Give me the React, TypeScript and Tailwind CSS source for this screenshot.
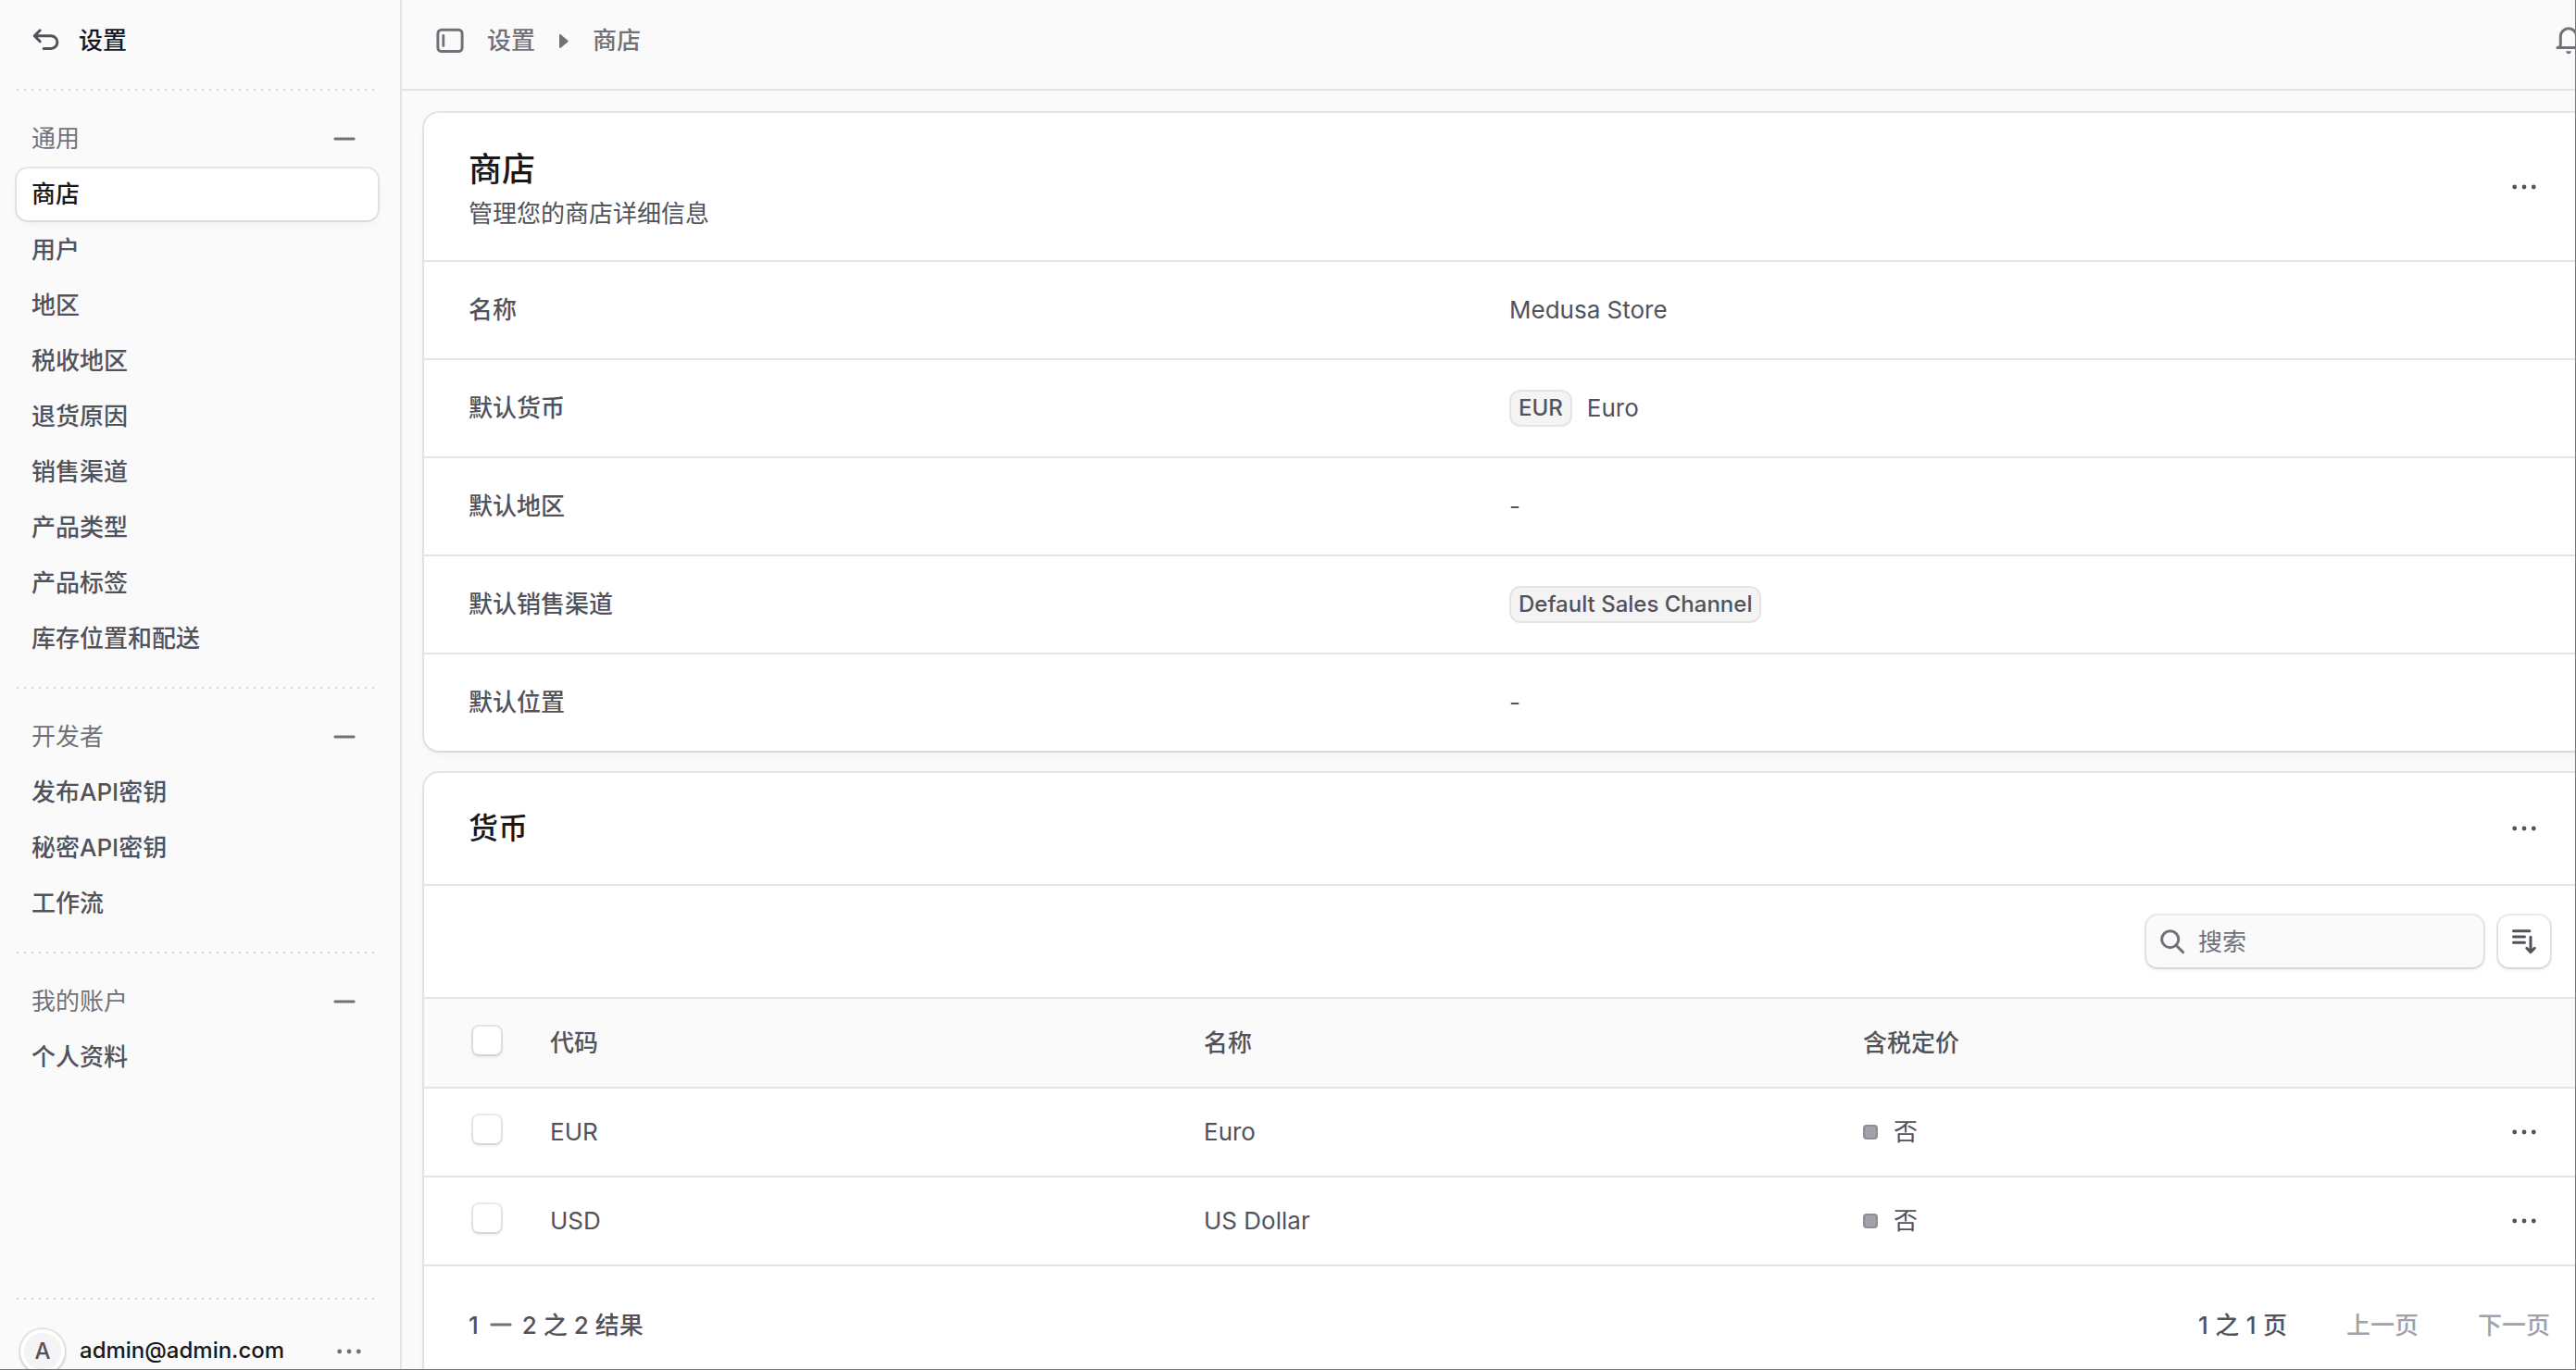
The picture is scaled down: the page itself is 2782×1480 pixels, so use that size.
import type { ReactNode } from "react";

type IconProps = { className?: string; children: ReactNode };

const Icon = ({ className = "", children }: IconProps) => (
  <svg
    viewBox="0 0 15 15"
    fill="none"
    stroke="currentColor"
    strokeWidth={1.5}
    strokeLinecap="round"
    strokeLinejoin="round"
    className={`size-[30px] shrink-0 ${className}`}
  >
    {children}
  </svg>
);

const BackIcon = () => (
  <Icon className="text-[#52525b]">
    <path d="M4.6 1.9 1.6 4.9l3 3M1.6 4.9h8.95a3.4 3.4 0 0 1 0 6.8H6.6" />
  </Icon>
);

const PanelIcon = () => (
  <Icon className="text-[#71717a]">
    <rect x="0.95" y="1.6" width="13.1" height="11.7" rx="2" />
    <path d="M3.9 4.7v5.6" strokeWidth={1.4} />
  </Icon>
);

const BellIcon = () => (
  <Icon className="text-[#71717a]">
    <path d="M1.45 11.3c.9 0 1.7-.6 1.7-1.6V5.25a4.35 4.35 0 0 1 8.7 0V9.7c0 1 .8 1.6 1.7 1.6z" />
    <path d="M6 13.1h3c-.2.9-.8 1.5-1.5 1.5S6.2 14 6 13.1z" fill="currentColor" stroke="none" />
  </Icon>
);

const MinusIcon = () => (
  <Icon className="text-[#71717a]">
    <path d="M2.45 7.5h10.1" />
  </Icon>
);

const DotsIcon = ({ className = "text-[#52525b]" }: { className?: string }) => (
  <Icon className={className}>
    <g fill="currentColor" stroke="none">
      <circle cx="2.35" cy="7.5" r="1.2" />
      <circle cx="7.5" cy="7.5" r="1.2" />
      <circle cx="12.65" cy="7.5" r="1.2" />
    </g>
  </Icon>
);

const SearchIcon = () => (
  <Icon className="text-[#71717a]">
    <circle cx="6.35" cy="6.35" r="4.5" />
    <path d="m9.6 9.6 3.7 3.7" />
  </Icon>
);

const SortIcon = () => (
  <Icon className="text-[#52525b]">
    <path d="M1.75 1.9h8.7M1.75 5h6M1.75 8.15h6M11 5.1v8.2M8.9 11.15l2.1 2.15 2.1-2.15" />
  </Icon>
);

const DottedLine = () => (
  <div className="ml-[18px] h-[2px] w-[388px] shrink-0 bg-[repeating-linear-gradient(90deg,#d4d4d8_0_2px,transparent_2px_8px)]" />
);

type Group = { title: string; items: string[]; active?: string };

const groups: Group[] = [
  {
    title: "通用",
    active: "商店",
    items: ["商店", "用户", "地区", "税收地区", "退货原因", "销售渠道", "产品类型", "产品标签", "库存位置和配送"],
  },
  { title: "开发者", items: ["发布API密钥", "秘密API密钥", "工作流"] },
  { title: "我的账户", items: ["个人资料"] },
];

const NavGroup = ({ group }: { group: Group }) => (
  <section className="px-[18px] pt-6 pb-6">
    <div className="flex h-14 items-center justify-between pr-[27px] pl-4 text-[#71717a]">
      <span className="pb-0.5">{group.title}</span>
      <MinusIcon />
    </div>
    <nav className="mt-1 flex flex-col gap-1">
      {group.items.map((item) => (
        <a
          key={item}
          className={
            item === group.active
              ? "flex h-14 w-[390px] items-center rounded-xl bg-white pb-0.5 pl-4 font-medium text-[#18181b] shadow-[0_0_0_2px_rgba(0,0,0,0.08),0_2px_4px_-2px_rgba(0,0,0,0.08),0_4px_8px_0_rgba(0,0,0,0.04)]"
              : "flex h-14 w-[390px] items-center pb-0.5 pl-4 font-medium text-[#52525b]"
          }
        >
          {item}
        </a>
      ))}
    </nav>
  </section>
);

const Sidebar = () => (
  <aside className="flex h-full w-[434px] shrink-0 flex-col border-r-2 border-[#e4e4e7]">
    <div className="flex h-[96px] shrink-0 items-center gap-[21px] pb-2 pl-[34px] font-medium text-[#18181b]">
      <BackIcon />
      <span className="pb-0.5">设置</span>
    </div>
    {groups.map((g) => (
      <div key={g.title}>
        <DottedLine />
        <NavGroup group={g} />
      </div>
    ))}
    <div className="mt-auto h-[78px] shrink-0">
      <DottedLine />
      <div className="flex h-[112px] items-center pl-[22px]">
        <div className="flex size-12 items-center justify-center rounded-full bg-white shadow-[0_0_0_2px_rgba(0,0,0,0.08),0_2px_4px_rgba(0,0,0,0.12)]">
          <div className="flex size-10 items-center justify-center rounded-full bg-[#f4f4f5] text-2xl font-medium text-[#52525b]">
            A
          </div>
        </div>
        <span className="ml-4 w-[276px] pb-0.5 text-2xl font-medium text-[#18181b]">admin@admin.com</span>
        <DotsIcon className="text-[#71717a]" />
      </div>
    </div>
  </aside>
);

const Topbar = () => (
  <header className="flex h-[98px] shrink-0 items-center border-b-2 border-[#e4e4e7] pb-2 pl-[37px] font-medium text-[#71717a]">
    <PanelIcon />
    <span className="ml-[25px] pb-0.5">设置</span>
    <svg viewBox="0 0 10 15" className="mx-[26px] h-[15px] w-[10px] fill-current">
      <path d="M0 1.2C0 .2 1-.2 1.8.4L9.300 6.700a1 1 0 0 1 0 1.600L1.800 14.600C1 15.200 0 14.800 0 13.800z" />
    </svg>
    <span className="pb-0.5">商店</span>
    <div className="mr-[13px] ml-auto">
      <BellIcon />
    </div>
  </header>
);

const Badge = ({ children }: { children: ReactNode }) => (
  <span className="flex h-10 items-center rounded-xl border-2 border-[#e4e4e7] bg-[#f4f4f5] px-2 text-2xl font-medium">
    {children}
  </span>
);

const details: { label: string; value: ReactNode }[] = [
  { label: "名称", value: <span className="pb-0.5">Medusa Store</span> },
  {
    label: "默认货币",
    value: (
      <>
        <Badge>EUR</Badge>
        <span className="ml-4 pb-0.5">Euro</span>
      </>
    ),
  },
  { label: "默认地区", value: <span className="pb-0.5">-</span> },
  { label: "默认销售渠道", value: <Badge>Default Sales Channel</Badge> },
  { label: "默认位置", value: <span className="pb-0.5">-</span> },
];

const StoreCard = () => (
  <section className="w-[2344px] rounded-2xl bg-white shadow-[0_0_0_2px_rgba(0,0,0,0.08),0_2px_4px_-2px_rgba(0,0,0,0.08),0_4px_8px_0_rgba(0,0,0,0.04)]">
    <div className="flex h-[159px] items-center justify-between pr-[61px] pl-12">
      <div className="pt-px">
        <h1 className="text-[36px] leading-[56px] font-medium text-[#18181b]">商店</h1>
        <p className="leading-[39px]">管理您的商店详细信息</p>
      </div>
      <DotsIcon />
    </div>
    {details.map((d) => (
      <div key={d.label} className="grid h-[106px] grid-cols-[1124px_1fr] items-center border-t-2 border-[#e4e4e7] pl-12">
        <span className="pb-0.5 font-medium">{d.label}</span>
        <div className="flex items-center">{d.value}</div>
      </div>
    ))}
  </section>
);

const Checkbox = () => (
  <div className="mb-1.5 ml-[5px] size-[30px] rounded-md bg-white shadow-[0_2px_4px_0_rgba(0,0,0,0.12),0_0_0_2px_rgba(0,0,0,0.08)]" />
);

const currencies = [
  { code: "EUR", name: "Euro", taxInclusive: "否" },
  { code: "USD", name: "US Dollar", taxInclusive: "否" },
];

const CurrencyCard = () => (
  <section className="mt-6 w-[2344px] rounded-t-2xl bg-white shadow-[0_0_0_2px_rgba(0,0,0,0.08),0_2px_4px_-2px_rgba(0,0,0,0.08),0_4px_8px_0_rgba(0,0,0,0.04)]">
    <div className="flex h-[120px] items-center justify-between pr-[61px] pl-12">
      <h2 className="pb-0.5 text-[32px] font-medium text-[#18181b]">货币</h2>
      <DotsIcon />
    </div>
    <div className="flex h-[122px] items-center justify-end gap-4 border-t-2 border-[#e4e4e7] pr-12">
      <div className="flex h-14 w-[364px] items-center gap-[13px] rounded-xl bg-[#fafafa] pl-[13px] text-[#71717a] shadow-[0_2px_4px_0_rgba(0,0,0,0.12),0_0_0_2px_rgba(0,0,0,0.08)]">
        <SearchIcon />
        搜索
      </div>
      <button className="flex size-14 items-center justify-center rounded-xl bg-white shadow-[0_2px_4px_0_rgba(0,0,0,0.12),0_0_0_2px_rgba(0,0,0,0.08)]">
        <SortIcon />
      </button>
    </div>
    <div className="grid h-[97px] grid-cols-[88px_706px_712px_1fr] items-center border-t-2 border-[#e4e4e7] bg-[#fafafa] pl-12 font-medium">
      <Checkbox />
      <span>代码</span>
      <span>名称</span>
      <span>含税定价</span>
    </div>
    {currencies.map((c) => (
      <div
        key={c.code}
        className="grid h-[96px] grid-cols-[88px_706px_712px_1fr_30px] items-center border-t-2 border-[#e4e4e7] pr-[61px] pl-12"
      >
        <Checkbox />
        <span className="pb-0.5">{c.code}</span>
        <span className="pb-0.5">{c.name}</span>
        <span className="flex items-center gap-[17px]">
          <i className="size-4 rounded-[4px] border-2 border-[#8e8e96] bg-[#a1a1aa]" />
          <span className="pb-0.5">{c.taxInclusive}</span>
        </span>
        <DotsIcon />
      </div>
    ))}
    <div className="flex h-[130px] items-center border-t-2 border-[#e4e4e7] pr-12 pb-0.5 pl-12 font-medium">
      <span>1</span>
      <span className="mr-2 ml-[9px] flex">
        <MinusIcon />
      </span>
      <span>2 之 2 结果</span>
      <span className="ml-auto [word-spacing:0.5px]">1 之 1 页</span>
      <span className="ml-16 text-[#a1a1aa]">上一页</span>
      <span className="ml-16 text-[#a1a1aa]">下一页</span>
    </div>
  </section>
);

export default function App() {
  return (
    <div className="relative flex h-[1480px] w-[2782px] overflow-hidden bg-[#fafafa] font-[Inter,'Noto_Sans_CJK_SC',sans-serif] text-[26px] leading-[39px] text-[#52525b]">
      <Sidebar />
      <main className="flex min-w-0 flex-1 flex-col">
        <div className="w-[2368px]">
          <Topbar />
          <div className="pt-6 pl-6">
            <StoreCard />
            <CurrencyCard />
          </div>
        </div>
      </main>
      <div className="pointer-events-none absolute inset-0 border-r border-b border-[#757575]" />
    </div>
  );
}
